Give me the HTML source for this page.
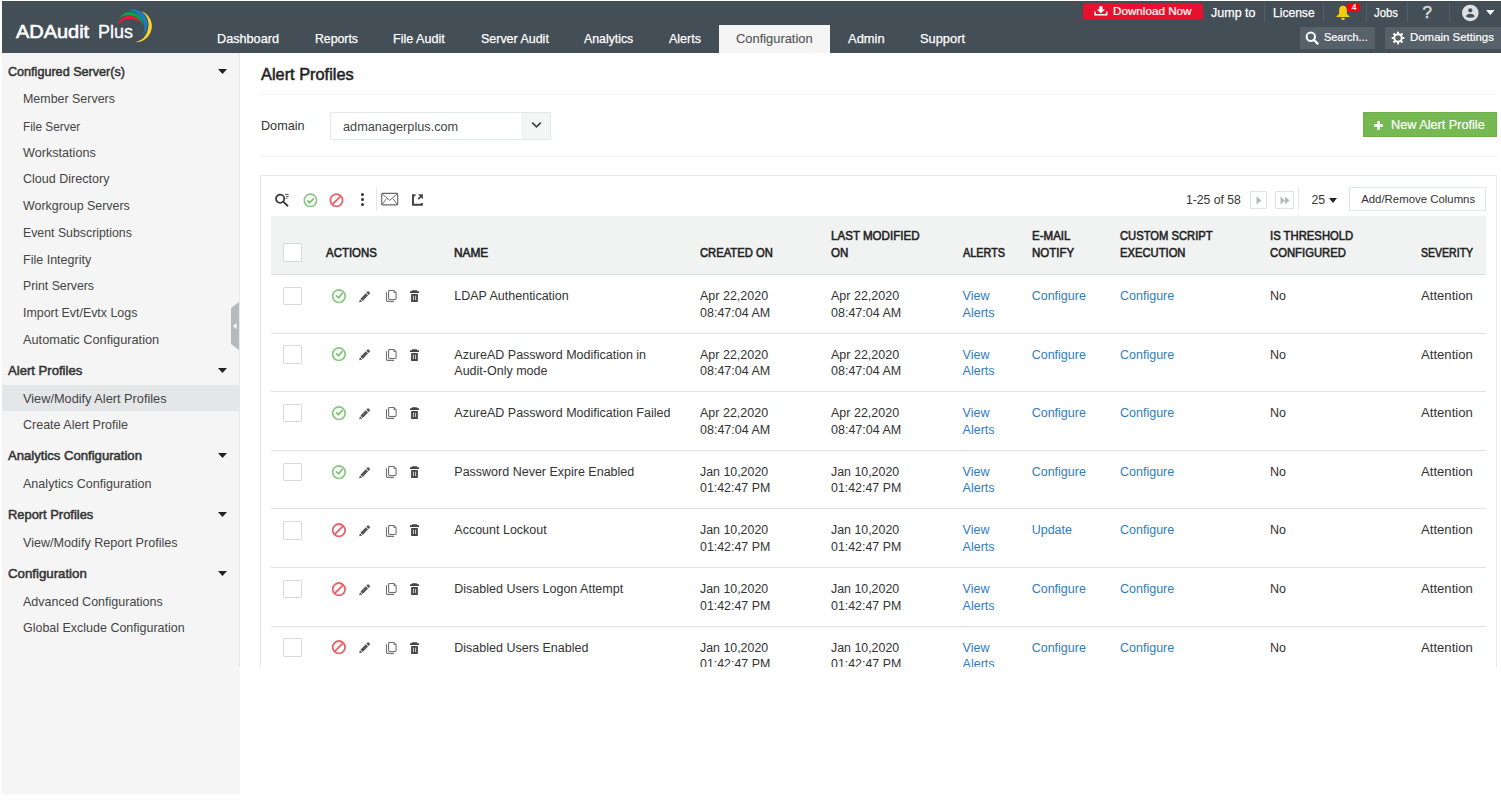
<!DOCTYPE html>
<html><head><meta charset="utf-8"><style>
html,body{margin:0;padding:0;background:#fff;width:1501px;height:803px;overflow:hidden;position:relative}
body{font-family:"Liberation Sans",sans-serif}
.t{position:absolute;white-space:nowrap}
.r{position:absolute}
svg.r{display:block}
</style></head><body>
<div class="r" style="left:2.00px;top:1.00px;width:1499.00px;height:52.00px;background:#434e56"></div>
<div class="t" style="left:16.40px;top:19.97px;font-size:18.9px;line-height:24.57px;transform:scaleX(1.0557);transform-origin:0 0;color:#fff;-webkit-text-stroke:0.6px #fff;">ADAudit</div>
<div class="t" style="left:97.60px;top:19.97px;font-size:18.9px;line-height:24.57px;transform:scaleX(0.9492);transform-origin:0 0;color:#fff;-webkit-text-stroke:0.3px #fff;">Plus</div>
<svg class="r" style="left:110px;top:5px" width="50" height="45" viewBox="0 0 50 45">
<path d="M7.00 21.30A12.27 12.27 0 0 1 30.50 18.20A15.10 15.10 0 0 0 7.00 21.30Z" fill="#e31b3b"/>
<path d="M8.40 13.70A13.35 13.35 0 0 1 33.35 20.70A15.84 15.84 0 0 0 8.40 13.70Z" fill="#0fa14a"/>
<path d="M18.20 5.30A14.52 14.52 0 0 1 33.10 29.40A17.19 17.19 0 0 0 18.20 5.30Z" fill="#1e7cc6"/>
<path d="M31.70 6.20A16.13 16.13 0 0 1 25.50 37.30A17.81 17.81 0 0 0 31.70 6.20Z" fill="#f7d531"/>
</svg>
<div class="t" style="left:217.30px;top:29.95px;font-size:13.4px;line-height:17.42px;transform:scaleX(0.9458);transform-origin:0 0;color:#fff;-webkit-text-stroke:0.25px #fff;">Dashboard</div>
<div class="t" style="left:315.00px;top:29.95px;font-size:13.4px;line-height:17.42px;transform:scaleX(0.9164);transform-origin:0 0;color:#fff;-webkit-text-stroke:0.25px #fff;">Reports</div>
<div class="t" style="left:393.30px;top:29.95px;font-size:13.4px;line-height:17.42px;transform:scaleX(0.938);transform-origin:0 0;color:#fff;-webkit-text-stroke:0.25px #fff;">File Audit</div>
<div class="t" style="left:480.50px;top:29.95px;font-size:13.4px;line-height:17.42px;transform:scaleX(0.9302);transform-origin:0 0;color:#fff;-webkit-text-stroke:0.25px #fff;">Server Audit</div>
<div class="t" style="left:583.70px;top:29.95px;font-size:13.4px;line-height:17.42px;transform:scaleX(0.9194);transform-origin:0 0;color:#fff;-webkit-text-stroke:0.25px #fff;">Analytics</div>
<div class="t" style="left:668.70px;top:29.95px;font-size:13.4px;line-height:17.42px;transform:scaleX(0.9342);transform-origin:0 0;color:#fff;-webkit-text-stroke:0.25px #fff;">Alerts</div>
<div class="t" style="left:848.00px;top:29.95px;font-size:13.4px;line-height:17.42px;transform:scaleX(0.9662);transform-origin:0 0;color:#fff;-webkit-text-stroke:0.25px #fff;">Admin</div>
<div class="t" style="left:920.00px;top:29.95px;font-size:13.4px;line-height:17.42px;transform:scaleX(0.9588);transform-origin:0 0;color:#fff;-webkit-text-stroke:0.25px #fff;">Support</div>
<div class="r" style="left:719.00px;top:25.00px;width:111.00px;height:28.00px;background:#f5f5f5"></div>
<div class="t" style="left:736.00px;top:29.95px;font-size:13.4px;line-height:17.42px;transform:scaleX(0.9622);transform-origin:0 0;color:#555;-webkit-text-stroke:0.15px #555;">Configuration</div>
<div class="r" style="left:1083.00px;top:3.00px;width:120.00px;height:17.00px;background:#e8112d;border-radius:3px"></div>
<div class="t" style="left:1112.50px;top:4.04px;font-size:11px;line-height:14.3px;transform:scaleX(1.061);transform-origin:0 0;color:#fff;-webkit-text-stroke:0.2px #fff;">Download Now</div>
<svg class="r" style="left:1093.5px;top:6px" width="14" height="10" viewBox="0 0 14 10">
<path d="M5.2 0.3h3.3v3.2h2.4L6.85 7.3 2.8 3.5h2.4z" fill="#fff"/><path d="M1 5.6v3.2h11.7V5.6" fill="none" stroke="#fff" stroke-width="1.5"/></svg>
<div class="t" style="left:1211.00px;top:4.74px;font-size:12.8px;line-height:16.64px;transform:scaleX(0.9773);transform-origin:0 0;color:#fff;-webkit-text-stroke:0.25px #fff;">Jump to</div>
<div class="r" style="left:1264.00px;top:2.70px;width:1.00px;height:19.30px;background:#55606a"></div>
<div class="r" style="left:1323.00px;top:2.70px;width:1.00px;height:19.30px;background:#55606a"></div>
<div class="r" style="left:1366.00px;top:2.70px;width:1.00px;height:19.30px;background:#55606a"></div>
<div class="r" style="left:1407.00px;top:2.70px;width:1.00px;height:19.30px;background:#55606a"></div>
<div class="r" style="left:1449.00px;top:2.70px;width:1.00px;height:19.30px;background:#55606a"></div>
<div class="t" style="left:1273.00px;top:4.74px;font-size:12.8px;line-height:16.64px;transform:scaleX(0.9429);transform-origin:0 0;color:#fff;-webkit-text-stroke:0.25px #fff;">License</div>
<svg class="r" style="left:1334.5px;top:5px" width="16" height="16" viewBox="0 0 16 16">
<path d="M8 0.7C5.4 0.7 4.1 2.6 4.1 5.2V9L1.3 11.5V12H14.7V11.5L11.9 9V5.2C11.9 2.6 10.6 0.7 8 0.7Z" fill="#efcf0c"/><ellipse cx="8" cy="13.9" rx="1.8" ry="1.1" fill="#efcf0c"/></svg>
<div class="r" style="left:1347.20px;top:3.00px;width:13.00px;height:9.20px;background:#f5000c;border-radius:2px"></div>
<div class="t" style="left:1351.80px;top:2.13px;font-size:8.5px;line-height:11.05px;color:#fff;-webkit-text-stroke:0.2px #fff;">4</div>
<div class="t" style="left:1373.80px;top:4.74px;font-size:12.8px;line-height:16.64px;transform:scaleX(0.8876);transform-origin:0 0;color:#fff;-webkit-text-stroke:0.25px #fff;">Jobs</div>
<div class="t" style="left:1422.50px;top:1.56px;font-size:17px;line-height:22.1px;color:#d5d8da;-webkit-text-stroke:0.6px #d5d8da;">?</div>
<svg class="r" style="left:1461px;top:4px" width="19" height="18" viewBox="0 0 19 18">
<circle cx="9.3" cy="8.95" r="8.3" fill="#dde1e4"/><circle cx="9.25" cy="6.3" r="2.1" fill="#434e56"/><path d="M4.8 12.6C5.2 10.7 6.8 9.7 9.25 9.7S13.3 10.7 13.7 12.6C12.5 13.4 11 13.8 9.25 13.8S6 13.4 4.8 12.6Z" fill="#434e56"/></svg>
<svg class="r" style="left:1486px;top:10.4px" width="9" height="5" viewBox="0 0 9 5"><path d="M0 0h8.6L4.3 4.9z" fill="#fff"/></svg>
<div class="r" style="left:1300.00px;top:27.00px;width:75.00px;height:21.50px;background:#56616a"></div>
<svg class="r" style="left:1305px;top:31px" width="14" height="14" viewBox="0 0 14 14">
<circle cx="5.8" cy="5.8" r="4.2" fill="none" stroke="#fff" stroke-width="2"/><path d="M8.8 8.8L12.6 12.6" stroke="#fff" stroke-width="2.2" stroke-linecap="round"/></svg>
<div class="t" style="left:1323.90px;top:29.74px;font-size:11.8px;line-height:15.34px;transform:scaleX(0.9254);transform-origin:0 0;color:#fff;-webkit-text-stroke:0.2px #fff;">Search...</div>
<div class="r" style="left:1385.00px;top:27.00px;width:116.00px;height:21.50px;background:#56616a"></div>
<svg class="r" style="left:1391px;top:31px" width="14" height="14" viewBox="0 0 14 14">
<g fill="#fff">
<rect x="6" y="0.7" width="2" height="2.4"/><rect x="6" y="10.9" width="2" height="2.4"/><rect x="0.7" y="6" width="2.4" height="2"/><rect x="10.9" y="6" width="2.4" height="2"/>
<g transform="rotate(45 7 7)"><rect x="6" y="0.7" width="2" height="2.4"/><rect x="6" y="10.9" width="2" height="2.4"/><rect x="0.7" y="6" width="2.4" height="2"/><rect x="10.9" y="6" width="2.4" height="2"/></g>
</g><circle cx="7" cy="7" r="3.7" fill="none" stroke="#fff" stroke-width="1.9"/></svg>
<div class="t" style="left:1409.60px;top:29.74px;font-size:11.8px;line-height:15.34px;transform:scaleX(0.9691);transform-origin:0 0;color:#fff;-webkit-text-stroke:0.2px #fff;">Domain Settings</div>
<div class="r" style="left:2.00px;top:53.00px;width:238.00px;height:741.00px;background:#f5f5f5"></div>
<div class="r" style="left:239.00px;top:53.00px;width:1.00px;height:614.00px;background:#e6eaea"></div>
<div class="r" style="left:2.00px;top:385.00px;width:237.00px;height:25.60px;background:#e5e6e7"></div>
<svg class="r" style="left:230px;top:302px" width="9" height="48" viewBox="0 0 9 48">
<path d="M9 0 L9 48 L1 42 L1 6 Z" fill="#b6babd"/><path d="M6.5 21 L3 24 L6.5 27z" fill="#fff"/></svg>
<div class="t" style="left:8.00px;top:63.64px;font-size:12.6px;line-height:16.38px;transform:scaleX(1.0004);transform-origin:0 0;color:#333;-webkit-text-stroke:0.5px #333;">Configured Server(s)</div>
<svg class="r" style="left:218px;top:68.6px" width="9" height="5" viewBox="0 0 9 5"><path d="M0 0h9L4.5 5z" fill="#222"/></svg>
<div class="t" style="left:8.00px;top:362.54px;font-size:12.6px;line-height:16.38px;transform:scaleX(1.0402);transform-origin:0 0;color:#333;-webkit-text-stroke:0.5px #333;">Alert Profiles</div>
<svg class="r" style="left:218px;top:367.5px" width="9" height="5" viewBox="0 0 9 5"><path d="M0 0h9L4.5 5z" fill="#222"/></svg>
<div class="t" style="left:8.00px;top:448.04px;font-size:12.6px;line-height:16.38px;transform:scaleX(1.0398);transform-origin:0 0;color:#333;-webkit-text-stroke:0.5px #333;">Analytics Configuration</div>
<svg class="r" style="left:218px;top:453.0px" width="9" height="5" viewBox="0 0 9 5"><path d="M0 0h9L4.5 5z" fill="#222"/></svg>
<div class="t" style="left:8.00px;top:507.04px;font-size:12.6px;line-height:16.38px;transform:scaleX(1.0236);transform-origin:0 0;color:#333;-webkit-text-stroke:0.5px #333;">Report Profiles</div>
<svg class="r" style="left:218px;top:512.0px" width="9" height="5" viewBox="0 0 9 5"><path d="M0 0h9L4.5 5z" fill="#222"/></svg>
<div class="t" style="left:8.00px;top:566.04px;font-size:12.6px;line-height:16.38px;transform:scaleX(1.0514);transform-origin:0 0;color:#333;-webkit-text-stroke:0.5px #333;">Configuration</div>
<svg class="r" style="left:218px;top:571.0px" width="9" height="5" viewBox="0 0 9 5"><path d="M0 0h9L4.5 5z" fill="#222"/></svg>
<div class="t" style="left:23.10px;top:91.15px;font-size:12.9px;line-height:16.77px;transform:scaleX(0.9649);transform-origin:0 0;color:#444;">Member Servers</div>
<div class="t" style="left:23.10px;top:118.65px;font-size:12.9px;line-height:16.77px;transform:scaleX(0.9187);transform-origin:0 0;color:#444;">File Server</div>
<div class="t" style="left:23.10px;top:144.65px;font-size:12.9px;line-height:16.77px;transform:scaleX(0.9795);transform-origin:0 0;color:#444;">Workstations</div>
<div class="t" style="left:23.10px;top:171.35px;font-size:12.9px;line-height:16.77px;transform:scaleX(0.973);transform-origin:0 0;color:#444;">Cloud Directory</div>
<div class="t" style="left:23.10px;top:197.65px;font-size:12.9px;line-height:16.77px;transform:scaleX(0.964);transform-origin:0 0;color:#444;">Workgroup Servers</div>
<div class="t" style="left:23.10px;top:224.65px;font-size:12.9px;line-height:16.77px;transform:scaleX(0.9552);transform-origin:0 0;color:#444;">Event Subscriptions</div>
<div class="t" style="left:23.10px;top:251.65px;font-size:12.9px;line-height:16.77px;transform:scaleX(0.9721);transform-origin:0 0;color:#444;">File Integrity</div>
<div class="t" style="left:23.10px;top:278.15px;font-size:12.9px;line-height:16.77px;transform:scaleX(0.9523);transform-origin:0 0;color:#444;">Print Servers</div>
<div class="t" style="left:23.10px;top:304.85px;font-size:12.9px;line-height:16.77px;transform:scaleX(0.9613);transform-origin:0 0;color:#444;">Import Evt/Evtx Logs</div>
<div class="t" style="left:23.10px;top:331.65px;font-size:12.9px;line-height:16.77px;transform:scaleX(0.99);transform-origin:0 0;color:#444;">Automatic Configuration</div>
<div class="t" style="left:23.10px;top:390.65px;font-size:12.9px;line-height:16.77px;transform:scaleX(0.9889);transform-origin:0 0;color:#444;">View/Modify Alert Profiles</div>
<div class="t" style="left:23.10px;top:416.65px;font-size:12.9px;line-height:16.77px;transform:scaleX(0.9707);transform-origin:0 0;color:#444;">Create Alert Profile</div>
<div class="t" style="left:23.10px;top:475.65px;font-size:12.9px;line-height:16.77px;transform:scaleX(0.9739);transform-origin:0 0;color:#444;">Analytics Configuration</div>
<div class="t" style="left:23.10px;top:535.25px;font-size:12.9px;line-height:16.77px;transform:scaleX(0.9778);transform-origin:0 0;color:#444;">View/Modify Report Profiles</div>
<div class="t" style="left:23.10px;top:593.65px;font-size:12.9px;line-height:16.77px;transform:scaleX(0.9705);transform-origin:0 0;color:#444;">Advanced Configurations</div>
<div class="t" style="left:23.10px;top:619.65px;font-size:12.9px;line-height:16.77px;transform:scaleX(0.9678);transform-origin:0 0;color:#444;">Global Exclude Configuration</div>
<div style="position:absolute;left:0;top:0;width:1501px;height:667px;overflow:hidden">
<div class="t" style="left:260.50px;top:64.85px;font-size:15.6px;line-height:20.28px;transform:scaleX(1.0483);transform-origin:0 0;color:#222;-webkit-text-stroke:0.5px #222;">Alert Profiles</div>
<div class="r" style="left:260.00px;top:94.00px;width:1237.00px;height:1.00px;background:#f2f4f4"></div>
<div class="t" style="left:260.50px;top:118.04px;font-size:12.8px;line-height:16.64px;transform:scaleX(0.9862);transform-origin:0 0;color:#333;">Domain</div>
<div class="r" style="left:330.00px;top:112.00px;width:221.00px;height:27.50px;background:#fff;border:1px solid #e3e9e9;border-radius:2px;box-sizing:border-box"></div>
<div class="r" style="left:522.00px;top:113.00px;width:28.00px;height:25.50px;background:#f4f5f5;border-left:1px solid #e9eeee;box-sizing:border-box"></div>
<svg class="r" style="left:531px;top:121px" width="11" height="8" viewBox="0 0 11 8"><path d="M1.2 1.6l4.3 4.2 4.3-4.2" fill="none" stroke="#444" stroke-width="1.8"/></svg>
<div class="t" style="left:343.40px;top:118.64px;font-size:12.7px;line-height:16.51px;transform:scaleX(1.002);transform-origin:0 0;color:#444;">admanagerplus.com</div>
<div class="r" style="left:1363.00px;top:112.40px;width:134.00px;height:24.30px;background:#76b852;border:1px solid #6cb046;box-sizing:border-box"></div>
<svg class="r" style="left:1373.8px;top:121px" width="9" height="9" viewBox="0 0 9 9"><path d="M3.3 0h2.4v3.3H9v2.4H5.7V9H3.3V5.7H0V3.3h3.3z" fill="#fff"/></svg>
<div class="t" style="left:1391.30px;top:116.84px;font-size:12.7px;line-height:16.51px;transform:scaleX(0.9992);transform-origin:0 0;color:#fff;-webkit-text-stroke:0.2px #fff;">New Alert Profile</div>
<div class="r" style="left:260.00px;top:156.00px;width:1237.00px;height:1.00px;background:#f2f4f4"></div>
<div class="r" style="left:260.00px;top:175.00px;width:1237.00px;height:600.00px;border:1px solid #e4eaea;box-sizing:border-box"></div>
<svg class="r" style="left:274px;top:192px" width="16" height="16" viewBox="0 0 16 16">
<circle cx="6.1" cy="6.7" r="4.1" fill="none" stroke="#3a3a3a" stroke-width="1.8"/><path d="M9.4 9.9L13.5 13.7" stroke="#3a3a3a" stroke-width="1.9" stroke-linecap="round"/>
<path d="M10.9 2.4h3.7M11.8 4.4h2.8M11.8 6.3h1.7" stroke="#555" stroke-width="1"/></svg>
<svg class="r" style="left:303px;top:192.5px" width="15" height="15" viewBox="0 0 15 15">
<circle cx="7.4" cy="7.3" r="6.2" fill="none" stroke="#80c67a" stroke-width="1.5"/><path d="M4.3 7.5l2.2 2.2 4.3-4.2" fill="none" stroke="#80c67a" stroke-width="1.8"/></svg>
<svg class="r" style="left:329px;top:192.5px" width="15" height="15" viewBox="0 0 15 15">
<circle cx="7.5" cy="7.3" r="6.1" fill="none" stroke="#e8646a" stroke-width="1.8"/><path d="M3.3 11.5L11.7 3.1" stroke="#e8646a" stroke-width="1.8"/></svg>
<div class="r" style="left:360.70px;top:192.90px;width:3.00px;height:3.00px;background:#333;border-radius:50%"></div>
<div class="r" style="left:360.70px;top:197.90px;width:3.00px;height:3.00px;background:#333;border-radius:50%"></div>
<div class="r" style="left:360.70px;top:203.00px;width:3.00px;height:3.00px;background:#333;border-radius:50%"></div>
<div class="r" style="left:375.50px;top:187.00px;width:1.00px;height:24.00px;background:#e3e8e8"></div>
<svg class="r" style="left:381px;top:192px" width="18" height="14" viewBox="0 0 18 14">
<rect x="0.7" y="1.4" width="16" height="11.4" rx="1" fill="none" stroke="#666" stroke-width="1.15"/><path d="M1.2 2L8.7 8.3L16.2 2M1 12.6L5.5 6.6M16.4 12.6L11.9 6.6" fill="none" stroke="#666" stroke-width="0.95"/></svg>
<svg class="r" style="left:411px;top:193px" width="13" height="14" viewBox="0 0 13 14">
<path d="M4.5 2.2H2V11.7H10.8V9.9" fill="none" stroke="#444" stroke-width="2"/><path d="M7.1 1.3H11.9V6.3Z" fill="#444"/><path d="M7.2 6.2L10.6 2.8" stroke="#444" stroke-width="1.8"/></svg>
<div class="t" style="left:1186.00px;top:192.64px;font-size:12.2px;line-height:15.86px;color:#333;">1-25 of 58</div>
<div class="r" style="left:1250.00px;top:191.00px;width:17.00px;height:17.60px;border:1px solid #e0e4e4;box-sizing:border-box;background:#fff"></div>
<svg class="r" style="left:1256px;top:196px" width="6" height="9" viewBox="0 0 6 9"><path d="M0.5 0.5L5.5 4.5L0.5 8.5z" fill="#b5b8ba"/></svg>
<div class="r" style="left:1275.40px;top:191.00px;width:18.20px;height:17.60px;border:1px solid #e0e4e4;box-sizing:border-box;background:#fff"></div>
<svg class="r" style="left:1280px;top:196px" width="10" height="9" viewBox="0 0 10 9"><path d="M0.5 0.5L5 4.5L0.5 8.5zM5 0.5L9.5 4.5L5 8.5z" fill="#b5b8ba"/></svg>
<div class="r" style="left:1298.00px;top:187.00px;width:1.00px;height:23.00px;background:#e3e8e8"></div>
<div class="t" style="left:1311.40px;top:192.54px;font-size:12.3px;line-height:15.99px;color:#333;">25</div>
<svg class="r" style="left:1328.5px;top:198px" width="8" height="5" viewBox="0 0 8 5"><path d="M0 0h8L4 5z" fill="#222"/></svg>
<div class="r" style="left:1349.30px;top:187.00px;width:136.70px;height:24.00px;border:1px solid #dfe7e7;box-sizing:border-box;background:#fff"></div>
<div class="t" style="left:1361.20px;top:191.84px;font-size:11.4px;line-height:14.82px;color:#333;">Add/Remove Columns</div>
<div class="r" style="left:271.00px;top:215.50px;width:1215.00px;height:59.00px;background:#f1f2f2;border-bottom:1px solid #d9dddd;box-sizing:border-box"></div>
<div class="r" style="left:283.00px;top:243.00px;width:18.50px;height:18.50px;background:#fff;border:1px solid #dadada;border-radius:1px;box-sizing:border-box"></div>
<div class="t" style="left:325.90px;top:245.74px;font-size:12.3px;line-height:15.99px;transform:scaleX(0.931);transform-origin:0 0;color:#222;-webkit-text-stroke:0.55px #222;">ACTIONS</div>
<div class="t" style="left:454.30px;top:245.74px;font-size:12.3px;line-height:15.99px;transform:scaleX(0.9652);transform-origin:0 0;color:#222;-webkit-text-stroke:0.55px #222;">NAME</div>
<div class="t" style="left:700.40px;top:245.74px;font-size:12.3px;line-height:15.99px;transform:scaleX(0.9131);transform-origin:0 0;color:#222;-webkit-text-stroke:0.55px #222;">CREATED ON</div>
<div class="t" style="left:831.40px;top:228.44px;font-size:12.3px;line-height:17px;transform:scaleX(0.9416);transform-origin:0 0;color:#222;-webkit-text-stroke:0.55px #222;">LAST MODIFIED<br>ON</div>
<div class="t" style="left:962.60px;top:245.74px;font-size:12.3px;line-height:15.99px;transform:scaleX(0.8818);transform-origin:0 0;color:#222;-webkit-text-stroke:0.55px #222;">ALERTS</div>
<div class="t" style="left:1031.70px;top:228.44px;font-size:12.3px;line-height:17px;transform:scaleX(0.9379);transform-origin:0 0;color:#222;-webkit-text-stroke:0.55px #222;">E-MAIL<br>NOTIFY</div>
<div class="t" style="left:1120.00px;top:228.44px;font-size:12.3px;line-height:17px;transform:scaleX(0.9124);transform-origin:0 0;color:#222;-webkit-text-stroke:0.55px #222;">CUSTOM SCRIPT<br>EXECUTION</div>
<div class="t" style="left:1270.00px;top:228.44px;font-size:12.3px;line-height:17px;transform:scaleX(0.9186);transform-origin:0 0;color:#222;-webkit-text-stroke:0.55px #222;">IS THRESHOLD<br>CONFIGURED</div>
<div class="t" style="left:1421.40px;top:245.74px;font-size:12.3px;line-height:15.99px;transform:scaleX(0.8564);transform-origin:0 0;color:#222;-webkit-text-stroke:0.55px #222;">SEVERITY</div>
<div class="r" style="left:271.00px;top:332.60px;width:1215.00px;height:1.00px;background:#dfe3e3"></div>
<div class="r" style="left:283.00px;top:286.70px;width:18.50px;height:18.50px;background:#fff;border:1px solid #dadada;border-radius:1px;box-sizing:border-box"></div>
<svg class="r" style="left:331px;top:288.70px" width="16" height="16" viewBox="0 0 16 16">
<circle cx="7.9" cy="7.2" r="6.3" fill="none" stroke="#88c77e" stroke-width="1.7"/><path d="M5.1 6.5L7.5 8.7L11.8 3.9" fill="none" stroke="#88c77e" stroke-width="2"/></svg>
<svg class="r" style="left:357px;top:288.70px" width="14" height="16" viewBox="0 0 14 16">
<g transform="translate(7.1 8.3) rotate(45)" fill="#555"><rect x="-1.6" y="-7.2" width="3.2" height="2.4"/><rect x="-1.6" y="-4" width="3.2" height="7.6"/><path d="M-1.6 4.3L1.6 4.3L0 7Z"/></g></svg>
<svg class="r" style="left:385px;top:289px" width="13" height="14" viewBox="0 0 13 14">
<path d="M1.5 3.3V11.5Q1.5 12.4 2.4 12.4H9.1" fill="none" stroke="#707070" stroke-width="1.1"/>
<path d="M3.6 2.4Q3.6 1.5 4.5 1.5H8.9L11.1 3.7V9.6Q11.1 10.5 10.2 10.5H4.5Q3.6 10.5 3.6 9.6Z" fill="none" stroke="#707070" stroke-width="1.1"/>
<path d="M8.6 1.8L10.8 4H8.6Z" fill="#707070"/></svg>
<svg class="r" style="left:410px;top:290px" width="9" height="13" viewBox="0 0 9 13">
<path d="M2.3 0.3H6.7L7.4 1.2H9V2.9H0V1.2H1.6Z" fill="#444"/>
<rect x="1.1" y="4" width="6.8" height="7.9" rx="0.4" fill="#444"/><rect x="2.9" y="5.7" width="1.1" height="4.4" fill="#c8c8c8"/><rect x="5" y="5.7" width="1.1" height="4.4" fill="#c8c8c8"/></svg>
<div class="t" style="left:454.30px;top:288.07px;font-size:12.5px;line-height:16.6px;color:#333;">LDAP Authentication</div>
<div class="t" style="left:700.40px;top:288.07px;font-size:12.5px;line-height:16.6px;transform:scaleX(1.0001);transform-origin:0 0;color:#333;">Apr 22,2020<br>08:47:04 AM</div>
<div class="t" style="left:831.40px;top:288.07px;font-size:12.5px;line-height:16.6px;transform:scaleX(1.0001);transform-origin:0 0;color:#333;">Apr 22,2020<br>08:47:04 AM</div>
<div class="t" style="left:962.60px;top:288.07px;font-size:12.5px;line-height:16.6px;color:#2f7dbf;">View<br>Alerts</div>
<div class="t" style="left:1031.70px;top:288.07px;font-size:12.5px;line-height:16.6px;color:#2f7dbf;">Configure</div>
<div class="t" style="left:1120.00px;top:288.07px;font-size:12.5px;line-height:16.6px;color:#2f7dbf;">Configure</div>
<div class="t" style="left:1270.00px;top:288.07px;font-size:12.5px;line-height:16.6px;color:#333;">No</div>
<div class="t" style="left:1421.40px;top:288.07px;font-size:12.5px;line-height:16.6px;transform:scaleX(1.0498);transform-origin:0 0;color:#333;">Attention</div>
<div class="r" style="left:271.00px;top:391.20px;width:1215.00px;height:1.00px;background:#dfe3e3"></div>
<div class="r" style="left:283.00px;top:345.30px;width:18.50px;height:18.50px;background:#fff;border:1px solid #dadada;border-radius:1px;box-sizing:border-box"></div>
<svg class="r" style="left:331px;top:347.30px" width="16" height="16" viewBox="0 0 16 16">
<circle cx="7.9" cy="7.2" r="6.3" fill="none" stroke="#88c77e" stroke-width="1.7"/><path d="M5.1 6.5L7.5 8.7L11.8 3.9" fill="none" stroke="#88c77e" stroke-width="2"/></svg>
<svg class="r" style="left:357px;top:347.30px" width="14" height="16" viewBox="0 0 14 16">
<g transform="translate(7.1 8.3) rotate(45)" fill="#555"><rect x="-1.6" y="-7.2" width="3.2" height="2.4"/><rect x="-1.6" y="-4" width="3.2" height="7.6"/><path d="M-1.6 4.3L1.6 4.3L0 7Z"/></g></svg>
<svg class="r" style="left:385px;top:348px" width="13" height="14" viewBox="0 0 13 14">
<path d="M1.5 3.3V11.5Q1.5 12.4 2.4 12.4H9.1" fill="none" stroke="#707070" stroke-width="1.1"/>
<path d="M3.6 2.4Q3.6 1.5 4.5 1.5H8.9L11.1 3.7V9.6Q11.1 10.5 10.2 10.5H4.5Q3.6 10.5 3.6 9.6Z" fill="none" stroke="#707070" stroke-width="1.1"/>
<path d="M8.6 1.8L10.8 4H8.6Z" fill="#707070"/></svg>
<svg class="r" style="left:410px;top:349px" width="9" height="13" viewBox="0 0 9 13">
<path d="M2.3 0.3H6.7L7.4 1.2H9V2.9H0V1.2H1.6Z" fill="#444"/>
<rect x="1.1" y="4" width="6.8" height="7.9" rx="0.4" fill="#444"/><rect x="2.9" y="5.7" width="1.1" height="4.4" fill="#c8c8c8"/><rect x="5" y="5.7" width="1.1" height="4.4" fill="#c8c8c8"/></svg>
<div class="t" style="left:454.30px;top:346.67px;font-size:12.5px;line-height:16.6px;color:#333;">AzureAD Password Modification in<br>Audit-Only mode</div>
<div class="t" style="left:700.40px;top:346.67px;font-size:12.5px;line-height:16.6px;transform:scaleX(1.0001);transform-origin:0 0;color:#333;">Apr 22,2020<br>08:47:04 AM</div>
<div class="t" style="left:831.40px;top:346.67px;font-size:12.5px;line-height:16.6px;transform:scaleX(1.0001);transform-origin:0 0;color:#333;">Apr 22,2020<br>08:47:04 AM</div>
<div class="t" style="left:962.60px;top:346.67px;font-size:12.5px;line-height:16.6px;color:#2f7dbf;">View<br>Alerts</div>
<div class="t" style="left:1031.70px;top:346.67px;font-size:12.5px;line-height:16.6px;color:#2f7dbf;">Configure</div>
<div class="t" style="left:1120.00px;top:346.67px;font-size:12.5px;line-height:16.6px;color:#2f7dbf;">Configure</div>
<div class="t" style="left:1270.00px;top:346.67px;font-size:12.5px;line-height:16.6px;color:#333;">No</div>
<div class="t" style="left:1421.40px;top:346.67px;font-size:12.5px;line-height:16.6px;transform:scaleX(1.0498);transform-origin:0 0;color:#333;">Attention</div>
<div class="r" style="left:271.00px;top:449.80px;width:1215.00px;height:1.00px;background:#dfe3e3"></div>
<div class="r" style="left:283.00px;top:403.90px;width:18.50px;height:18.50px;background:#fff;border:1px solid #dadada;border-radius:1px;box-sizing:border-box"></div>
<svg class="r" style="left:331px;top:405.90px" width="16" height="16" viewBox="0 0 16 16">
<circle cx="7.9" cy="7.2" r="6.3" fill="none" stroke="#88c77e" stroke-width="1.7"/><path d="M5.1 6.5L7.5 8.7L11.8 3.9" fill="none" stroke="#88c77e" stroke-width="2"/></svg>
<svg class="r" style="left:357px;top:405.90px" width="14" height="16" viewBox="0 0 14 16">
<g transform="translate(7.1 8.3) rotate(45)" fill="#555"><rect x="-1.6" y="-7.2" width="3.2" height="2.4"/><rect x="-1.6" y="-4" width="3.2" height="7.6"/><path d="M-1.6 4.3L1.6 4.3L0 7Z"/></g></svg>
<svg class="r" style="left:385px;top:406px" width="13" height="14" viewBox="0 0 13 14">
<path d="M1.5 3.3V11.5Q1.5 12.4 2.4 12.4H9.1" fill="none" stroke="#707070" stroke-width="1.1"/>
<path d="M3.6 2.4Q3.6 1.5 4.5 1.5H8.9L11.1 3.7V9.6Q11.1 10.5 10.2 10.5H4.5Q3.6 10.5 3.6 9.6Z" fill="none" stroke="#707070" stroke-width="1.1"/>
<path d="M8.6 1.8L10.8 4H8.6Z" fill="#707070"/></svg>
<svg class="r" style="left:410px;top:407px" width="9" height="13" viewBox="0 0 9 13">
<path d="M2.3 0.3H6.7L7.4 1.2H9V2.9H0V1.2H1.6Z" fill="#444"/>
<rect x="1.1" y="4" width="6.8" height="7.9" rx="0.4" fill="#444"/><rect x="2.9" y="5.7" width="1.1" height="4.4" fill="#c8c8c8"/><rect x="5" y="5.7" width="1.1" height="4.4" fill="#c8c8c8"/></svg>
<div class="t" style="left:454.30px;top:405.27px;font-size:12.5px;line-height:16.6px;color:#333;">AzureAD Password Modification Failed</div>
<div class="t" style="left:700.40px;top:405.27px;font-size:12.5px;line-height:16.6px;transform:scaleX(1.0001);transform-origin:0 0;color:#333;">Apr 22,2020<br>08:47:04 AM</div>
<div class="t" style="left:831.40px;top:405.27px;font-size:12.5px;line-height:16.6px;transform:scaleX(1.0001);transform-origin:0 0;color:#333;">Apr 22,2020<br>08:47:04 AM</div>
<div class="t" style="left:962.60px;top:405.27px;font-size:12.5px;line-height:16.6px;color:#2f7dbf;">View<br>Alerts</div>
<div class="t" style="left:1031.70px;top:405.27px;font-size:12.5px;line-height:16.6px;color:#2f7dbf;">Configure</div>
<div class="t" style="left:1120.00px;top:405.27px;font-size:12.5px;line-height:16.6px;color:#2f7dbf;">Configure</div>
<div class="t" style="left:1270.00px;top:405.27px;font-size:12.5px;line-height:16.6px;color:#333;">No</div>
<div class="t" style="left:1421.40px;top:405.27px;font-size:12.5px;line-height:16.6px;transform:scaleX(1.0498);transform-origin:0 0;color:#333;">Attention</div>
<div class="r" style="left:271.00px;top:508.40px;width:1215.00px;height:1.00px;background:#dfe3e3"></div>
<div class="r" style="left:283.00px;top:462.50px;width:18.50px;height:18.50px;background:#fff;border:1px solid #dadada;border-radius:1px;box-sizing:border-box"></div>
<svg class="r" style="left:331px;top:464.50px" width="16" height="16" viewBox="0 0 16 16">
<circle cx="7.9" cy="7.2" r="6.3" fill="none" stroke="#88c77e" stroke-width="1.7"/><path d="M5.1 6.5L7.5 8.7L11.8 3.9" fill="none" stroke="#88c77e" stroke-width="2"/></svg>
<svg class="r" style="left:357px;top:464.50px" width="14" height="16" viewBox="0 0 14 16">
<g transform="translate(7.1 8.3) rotate(45)" fill="#555"><rect x="-1.6" y="-7.2" width="3.2" height="2.4"/><rect x="-1.6" y="-4" width="3.2" height="7.6"/><path d="M-1.6 4.3L1.6 4.3L0 7Z"/></g></svg>
<svg class="r" style="left:385px;top:465px" width="13" height="14" viewBox="0 0 13 14">
<path d="M1.5 3.3V11.5Q1.5 12.4 2.4 12.4H9.1" fill="none" stroke="#707070" stroke-width="1.1"/>
<path d="M3.6 2.4Q3.6 1.5 4.5 1.5H8.9L11.1 3.7V9.6Q11.1 10.5 10.2 10.5H4.5Q3.6 10.5 3.6 9.6Z" fill="none" stroke="#707070" stroke-width="1.1"/>
<path d="M8.6 1.8L10.8 4H8.6Z" fill="#707070"/></svg>
<svg class="r" style="left:410px;top:466px" width="9" height="13" viewBox="0 0 9 13">
<path d="M2.3 0.3H6.7L7.4 1.2H9V2.9H0V1.2H1.6Z" fill="#444"/>
<rect x="1.1" y="4" width="6.8" height="7.9" rx="0.4" fill="#444"/><rect x="2.9" y="5.7" width="1.1" height="4.4" fill="#c8c8c8"/><rect x="5" y="5.7" width="1.1" height="4.4" fill="#c8c8c8"/></svg>
<div class="t" style="left:454.30px;top:463.87px;font-size:12.5px;line-height:16.6px;color:#333;">Password Never Expire Enabled</div>
<div class="t" style="left:700.40px;top:463.87px;font-size:12.5px;line-height:16.6px;transform:scaleX(0.9904);transform-origin:0 0;color:#333;">Jan 10,2020<br>01:42:47 PM</div>
<div class="t" style="left:831.40px;top:463.87px;font-size:12.5px;line-height:16.6px;transform:scaleX(0.9904);transform-origin:0 0;color:#333;">Jan 10,2020<br>01:42:47 PM</div>
<div class="t" style="left:962.60px;top:463.87px;font-size:12.5px;line-height:16.6px;color:#2f7dbf;">View<br>Alerts</div>
<div class="t" style="left:1031.70px;top:463.87px;font-size:12.5px;line-height:16.6px;color:#2f7dbf;">Configure</div>
<div class="t" style="left:1120.00px;top:463.87px;font-size:12.5px;line-height:16.6px;color:#2f7dbf;">Configure</div>
<div class="t" style="left:1270.00px;top:463.87px;font-size:12.5px;line-height:16.6px;color:#333;">No</div>
<div class="t" style="left:1421.40px;top:463.87px;font-size:12.5px;line-height:16.6px;transform:scaleX(1.0498);transform-origin:0 0;color:#333;">Attention</div>
<div class="r" style="left:271.00px;top:567.00px;width:1215.00px;height:1.00px;background:#dfe3e3"></div>
<div class="r" style="left:283.00px;top:521.10px;width:18.50px;height:18.50px;background:#fff;border:1px solid #dadada;border-radius:1px;box-sizing:border-box"></div>
<svg class="r" style="left:331px;top:523.10px" width="16" height="16" viewBox="0 0 16 16">
<circle cx="7.9" cy="7.2" r="6.2" fill="none" stroke="#e8646a" stroke-width="1.8"/><path d="M3.6 11.5L12.2 2.9" stroke="#e8646a" stroke-width="1.8"/></svg>
<svg class="r" style="left:357px;top:523.10px" width="14" height="16" viewBox="0 0 14 16">
<g transform="translate(7.1 8.3) rotate(45)" fill="#555"><rect x="-1.6" y="-7.2" width="3.2" height="2.4"/><rect x="-1.6" y="-4" width="3.2" height="7.6"/><path d="M-1.6 4.3L1.6 4.3L0 7Z"/></g></svg>
<svg class="r" style="left:385px;top:524px" width="13" height="14" viewBox="0 0 13 14">
<path d="M1.5 3.3V11.5Q1.5 12.4 2.4 12.4H9.1" fill="none" stroke="#707070" stroke-width="1.1"/>
<path d="M3.6 2.4Q3.6 1.5 4.5 1.5H8.9L11.1 3.7V9.6Q11.1 10.5 10.2 10.5H4.5Q3.6 10.5 3.6 9.6Z" fill="none" stroke="#707070" stroke-width="1.1"/>
<path d="M8.6 1.8L10.8 4H8.6Z" fill="#707070"/></svg>
<svg class="r" style="left:410px;top:524px" width="9" height="13" viewBox="0 0 9 13">
<path d="M2.3 0.3H6.7L7.4 1.2H9V2.9H0V1.2H1.6Z" fill="#444"/>
<rect x="1.1" y="4" width="6.8" height="7.9" rx="0.4" fill="#444"/><rect x="2.9" y="5.7" width="1.1" height="4.4" fill="#c8c8c8"/><rect x="5" y="5.7" width="1.1" height="4.4" fill="#c8c8c8"/></svg>
<div class="t" style="left:454.30px;top:522.47px;font-size:12.5px;line-height:16.6px;color:#333;">Account Lockout</div>
<div class="t" style="left:700.40px;top:522.47px;font-size:12.5px;line-height:16.6px;transform:scaleX(0.9904);transform-origin:0 0;color:#333;">Jan 10,2020<br>01:42:47 PM</div>
<div class="t" style="left:831.40px;top:522.47px;font-size:12.5px;line-height:16.6px;transform:scaleX(0.9904);transform-origin:0 0;color:#333;">Jan 10,2020<br>01:42:47 PM</div>
<div class="t" style="left:962.60px;top:522.47px;font-size:12.5px;line-height:16.6px;color:#2f7dbf;">View<br>Alerts</div>
<div class="t" style="left:1031.70px;top:522.47px;font-size:12.5px;line-height:16.6px;color:#2f7dbf;">Update</div>
<div class="t" style="left:1120.00px;top:522.47px;font-size:12.5px;line-height:16.6px;color:#2f7dbf;">Configure</div>
<div class="t" style="left:1270.00px;top:522.47px;font-size:12.5px;line-height:16.6px;color:#333;">No</div>
<div class="t" style="left:1421.40px;top:522.47px;font-size:12.5px;line-height:16.6px;transform:scaleX(1.0498);transform-origin:0 0;color:#333;">Attention</div>
<div class="r" style="left:271.00px;top:625.60px;width:1215.00px;height:1.00px;background:#dfe3e3"></div>
<div class="r" style="left:283.00px;top:579.70px;width:18.50px;height:18.50px;background:#fff;border:1px solid #dadada;border-radius:1px;box-sizing:border-box"></div>
<svg class="r" style="left:331px;top:581.70px" width="16" height="16" viewBox="0 0 16 16">
<circle cx="7.9" cy="7.2" r="6.2" fill="none" stroke="#e8646a" stroke-width="1.8"/><path d="M3.6 11.5L12.2 2.9" stroke="#e8646a" stroke-width="1.8"/></svg>
<svg class="r" style="left:357px;top:581.70px" width="14" height="16" viewBox="0 0 14 16">
<g transform="translate(7.1 8.3) rotate(45)" fill="#555"><rect x="-1.6" y="-7.2" width="3.2" height="2.4"/><rect x="-1.6" y="-4" width="3.2" height="7.6"/><path d="M-1.6 4.3L1.6 4.3L0 7Z"/></g></svg>
<svg class="r" style="left:385px;top:582px" width="13" height="14" viewBox="0 0 13 14">
<path d="M1.5 3.3V11.5Q1.5 12.4 2.4 12.4H9.1" fill="none" stroke="#707070" stroke-width="1.1"/>
<path d="M3.6 2.4Q3.6 1.5 4.5 1.5H8.9L11.1 3.7V9.6Q11.1 10.5 10.2 10.5H4.5Q3.6 10.5 3.6 9.6Z" fill="none" stroke="#707070" stroke-width="1.1"/>
<path d="M8.6 1.8L10.8 4H8.6Z" fill="#707070"/></svg>
<svg class="r" style="left:410px;top:583px" width="9" height="13" viewBox="0 0 9 13">
<path d="M2.3 0.3H6.7L7.4 1.2H9V2.9H0V1.2H1.6Z" fill="#444"/>
<rect x="1.1" y="4" width="6.8" height="7.9" rx="0.4" fill="#444"/><rect x="2.9" y="5.7" width="1.1" height="4.4" fill="#c8c8c8"/><rect x="5" y="5.7" width="1.1" height="4.4" fill="#c8c8c8"/></svg>
<div class="t" style="left:454.30px;top:581.07px;font-size:12.5px;line-height:16.6px;color:#333;">Disabled Users Logon Attempt</div>
<div class="t" style="left:700.40px;top:581.07px;font-size:12.5px;line-height:16.6px;transform:scaleX(0.9904);transform-origin:0 0;color:#333;">Jan 10,2020<br>01:42:47 PM</div>
<div class="t" style="left:831.40px;top:581.07px;font-size:12.5px;line-height:16.6px;transform:scaleX(0.9904);transform-origin:0 0;color:#333;">Jan 10,2020<br>01:42:47 PM</div>
<div class="t" style="left:962.60px;top:581.07px;font-size:12.5px;line-height:16.6px;color:#2f7dbf;">View<br>Alerts</div>
<div class="t" style="left:1031.70px;top:581.07px;font-size:12.5px;line-height:16.6px;color:#2f7dbf;">Configure</div>
<div class="t" style="left:1120.00px;top:581.07px;font-size:12.5px;line-height:16.6px;color:#2f7dbf;">Configure</div>
<div class="t" style="left:1270.00px;top:581.07px;font-size:12.5px;line-height:16.6px;color:#333;">No</div>
<div class="t" style="left:1421.40px;top:581.07px;font-size:12.5px;line-height:16.6px;transform:scaleX(1.0498);transform-origin:0 0;color:#333;">Attention</div>
<div class="r" style="left:283.00px;top:638.30px;width:18.50px;height:18.50px;background:#fff;border:1px solid #dadada;border-radius:1px;box-sizing:border-box"></div>
<svg class="r" style="left:331px;top:640.30px" width="16" height="16" viewBox="0 0 16 16">
<circle cx="7.9" cy="7.2" r="6.2" fill="none" stroke="#e8646a" stroke-width="1.8"/><path d="M3.6 11.5L12.2 2.9" stroke="#e8646a" stroke-width="1.8"/></svg>
<svg class="r" style="left:357px;top:640.30px" width="14" height="16" viewBox="0 0 14 16">
<g transform="translate(7.1 8.3) rotate(45)" fill="#555"><rect x="-1.6" y="-7.2" width="3.2" height="2.4"/><rect x="-1.6" y="-4" width="3.2" height="7.6"/><path d="M-1.6 4.3L1.6 4.3L0 7Z"/></g></svg>
<svg class="r" style="left:385px;top:641px" width="13" height="14" viewBox="0 0 13 14">
<path d="M1.5 3.3V11.5Q1.5 12.4 2.4 12.4H9.1" fill="none" stroke="#707070" stroke-width="1.1"/>
<path d="M3.6 2.4Q3.6 1.5 4.5 1.5H8.9L11.1 3.7V9.6Q11.1 10.5 10.2 10.5H4.5Q3.6 10.5 3.6 9.6Z" fill="none" stroke="#707070" stroke-width="1.1"/>
<path d="M8.6 1.8L10.8 4H8.6Z" fill="#707070"/></svg>
<svg class="r" style="left:410px;top:642px" width="9" height="13" viewBox="0 0 9 13">
<path d="M2.3 0.3H6.7L7.4 1.2H9V2.9H0V1.2H1.6Z" fill="#444"/>
<rect x="1.1" y="4" width="6.8" height="7.9" rx="0.4" fill="#444"/><rect x="2.9" y="5.7" width="1.1" height="4.4" fill="#c8c8c8"/><rect x="5" y="5.7" width="1.1" height="4.4" fill="#c8c8c8"/></svg>
<div class="t" style="left:454.30px;top:639.67px;font-size:12.5px;line-height:16.6px;color:#333;">Disabled Users Enabled</div>
<div class="t" style="left:700.40px;top:639.67px;font-size:12.5px;line-height:16.6px;transform:scaleX(0.9904);transform-origin:0 0;color:#333;">Jan 10,2020<br>01:42:47 PM</div>
<div class="t" style="left:831.40px;top:639.67px;font-size:12.5px;line-height:16.6px;transform:scaleX(0.9904);transform-origin:0 0;color:#333;">Jan 10,2020<br>01:42:47 PM</div>
<div class="t" style="left:962.60px;top:639.67px;font-size:12.5px;line-height:16.6px;color:#2f7dbf;">View<br>Alerts</div>
<div class="t" style="left:1031.70px;top:639.67px;font-size:12.5px;line-height:16.6px;color:#2f7dbf;">Configure</div>
<div class="t" style="left:1120.00px;top:639.67px;font-size:12.5px;line-height:16.6px;color:#2f7dbf;">Configure</div>
<div class="t" style="left:1270.00px;top:639.67px;font-size:12.5px;line-height:16.6px;color:#333;">No</div>
<div class="t" style="left:1421.40px;top:639.67px;font-size:12.5px;line-height:16.6px;transform:scaleX(1.0498);transform-origin:0 0;color:#333;">Attention</div>
</div>
</body></html>
